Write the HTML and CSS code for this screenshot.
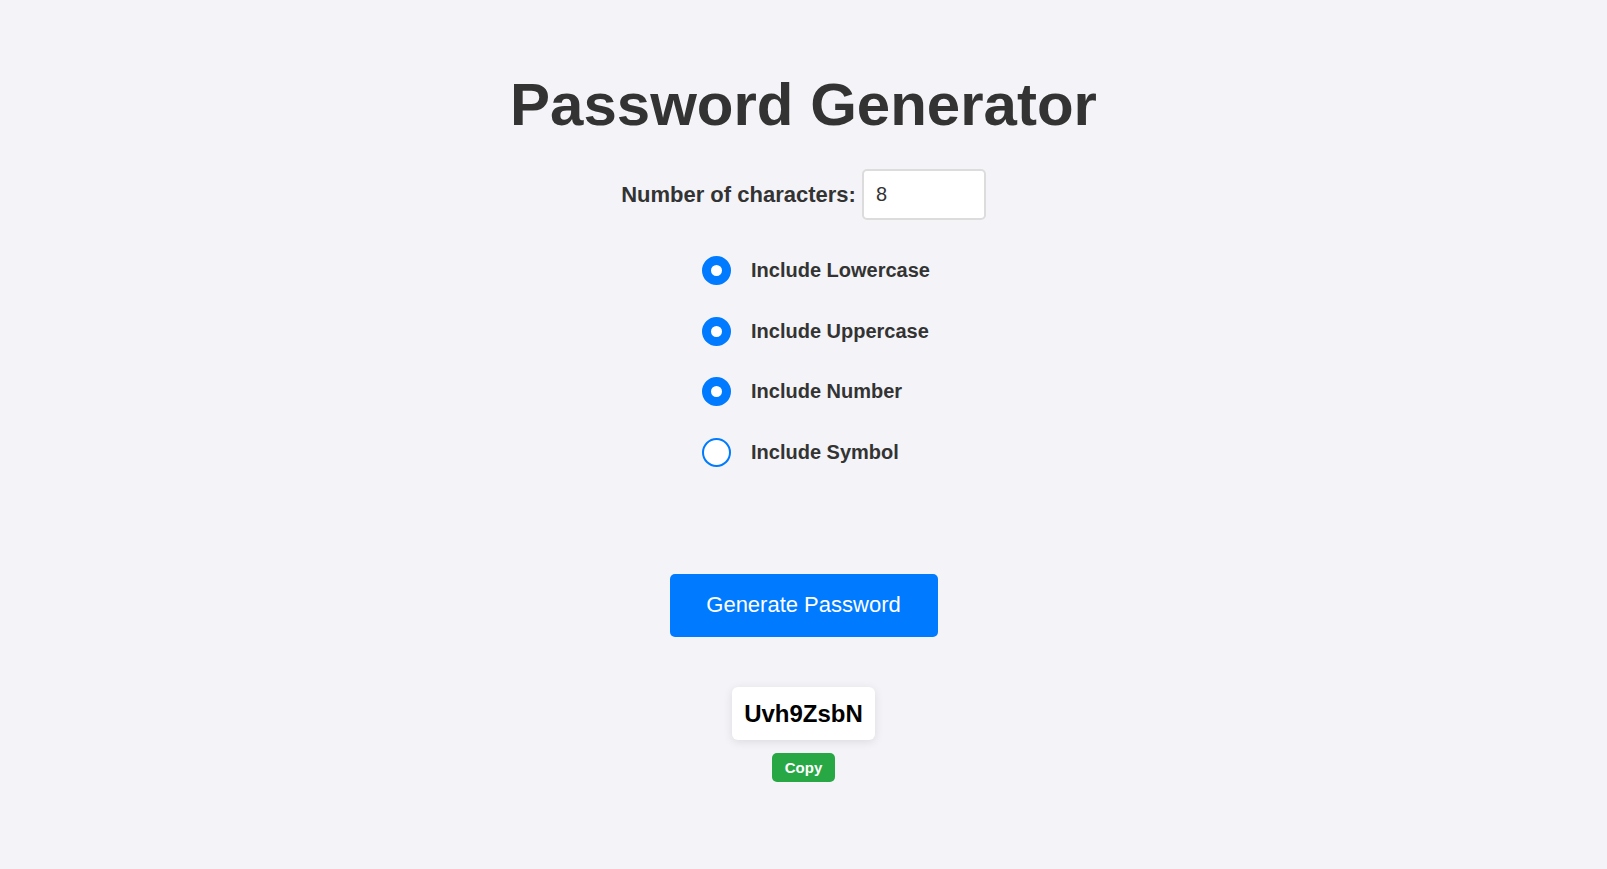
FILE: index.html
```html
<!DOCTYPE html>
<html lang="en">
<head>
<meta charset="utf-8">
<title>Password Generator</title>
<link rel="stylesheet" href="styles.css">
</head>
<body>
<main class="app">
  <h1 class="title">Password Generator</h1>
  <div class="length-row">
    <label class="length-label" for="len">Number of characters:</label>
    <input class="length-input" id="len" type="text" value="8">
  </div>
  <div class="options">
    <label class="option"><input class="radio" type="radio" checked><span>Include Lowercase</span></label>
    <label class="option"><input class="radio" type="radio" checked><span>Include Uppercase</span></label>
    <label class="option"><input class="radio" type="radio" checked><span>Include Number</span></label>
    <label class="option"><input class="radio" type="radio"><span>Include Symbol</span></label>
  </div>
  <button class="generate" type="button">Generate Password</button>
  <div class="result">Uvh9ZsbN</div>
  <button class="copy" type="button">Copy</button>
</main>
</body>
</html>
```

FILE: styles.css
```css
html, body {
  margin: 0;
  padding: 0;
}

body {
  background: #f4f4f8;
  font-family: "Liberation Sans", Arial, sans-serif;
  color: #333;
}

.app {
  display: flex;
  flex-direction: column;
  align-items: center;
  padding-top: 70px;
}

.title {
  margin: 0;
  font-size: 60px;
  line-height: 69px;
  font-weight: bold;
  color: #333;
}

.length-row {
  margin-top: 30px;
  display: flex;
  align-items: center;
  gap: 6px;
}

.length-label {
  font-size: 22px;
  font-weight: bold;
  color: #333;
}

.length-input {
  box-sizing: border-box;
  width: 124px;
  height: 51px;
  padding: 0 12px;
  border: 2px solid #dcdcdc;
  border-radius: 5px;
  background: #fff;
  font-family: "Liberation Sans", Arial, sans-serif;
  font-size: 20px;
  color: #333;
  outline: none;
}

.options {
  margin-top: 36px;
  width: 203px;
  display: flex;
  flex-direction: column;
  gap: 31.5px;
}

.option {
  display: flex;
  align-items: center;
  gap: 20px;
  height: 29px;
  white-space: nowrap;
  font-size: 20px;
  font-weight: bold;
  color: #333;
}

.radio {
  appearance: none;
  -webkit-appearance: none;
  box-sizing: border-box;
  flex: none;
  width: 29px;
  height: 29px;
  margin: 0;
  border-radius: 50%;
  border: 2px solid #007bff;
  background: #fff;
}

.radio:checked {
  border-width: 9.5px;
}

.generate {
  margin-top: 107px;
  box-sizing: border-box;
  width: 268px;
  height: 63px;
  border: none;
  border-radius: 5px;
  background: #007bff;
  color: #fff;
  font-family: "Liberation Sans", Arial, sans-serif;
  font-size: 22px;
  padding: 0;
}

.result {
  margin-top: 50px;
  box-sizing: border-box;
  width: 143px;
  height: 53px;
  padding-top: 2px;
  display: flex;
  align-items: center;
  justify-content: center;
  background: #fff;
  border-radius: 6px;
  box-shadow: 0 2px 10px rgba(0, 0, 0, 0.1);
  font-size: 24px;
  font-weight: bold;
  color: #000;
}

.copy {
  margin-top: 13px;
  box-sizing: border-box;
  width: 63px;
  height: 29px;
  padding: 0;
  border: none;
  border-radius: 5px;
  background: #28a745;
  color: #fff;
  font-family: "Liberation Sans", Arial, sans-serif;
  font-size: 15px;
  font-weight: bold;
}
```
